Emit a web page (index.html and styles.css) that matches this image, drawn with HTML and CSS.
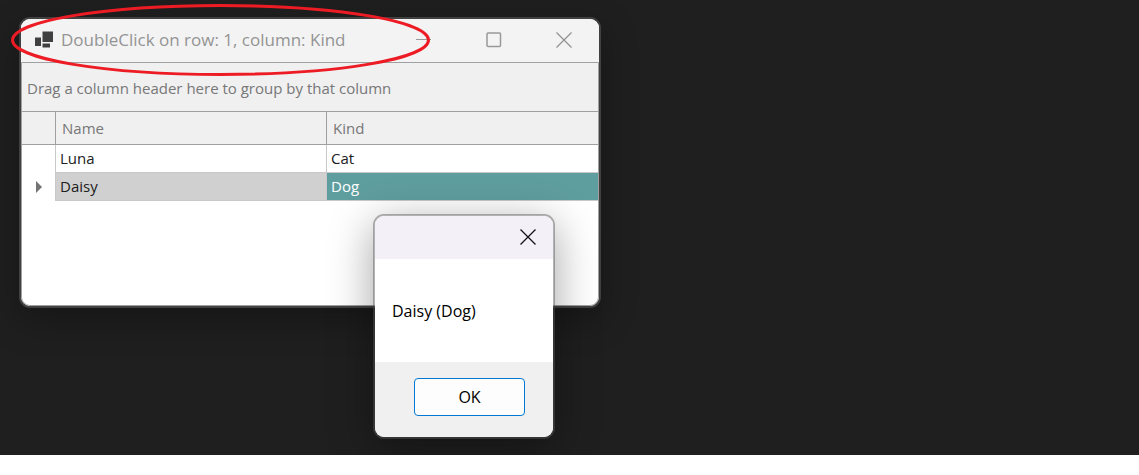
FILE: index.html
```html
<!DOCTYPE html>
<html lang="en">
<head>
<meta charset="utf-8">
<title>DoubleClick on row: 1, column: Kind</title>
<link rel="stylesheet" href="styles.css">
</head>
<body>
<main class="desktop">
  <section class="window">
    <header class="titlebar">
      <svg class="app-icon" width="19" height="18" viewBox="0 0 19 18" aria-hidden="true">
        <path d="M7.500 .5h10.500v10.500h-10.500zM0 6.500h6v8.500H0zM7.500 12.500h7.500v4h-7.500z" fill="#404040"/>
      </svg>
      <h1 class="title">DoubleClick on row: 1, column: Kind</h1>
      <div class="controls">
        <button class="control" type="button" aria-label="Minimize">
          <svg width="16" height="16" viewBox="0 0 16 16"><path d="M0 7.500h15" fill="none" stroke="#999"/></svg>
        </button>
        <button class="control" type="button" aria-label="Maximize">
          <svg width="16" height="16" viewBox="0 0 16 16"><rect x="1" y="1" width="13.500" height="13.500" rx="1" fill="none" stroke="#999" stroke-width="1.500"/></svg>
        </button>
        <button class="control" type="button" aria-label="Close">
          <svg width="16" height="16" viewBox="0 0 16 16"><path d="M.5.5l15 15M15.500 .5L.5 15.500" fill="none" stroke="#929292" stroke-width="1.300"/></svg>
        </button>
      </div>
    </header>
    <div class="grid">
      <p class="group-panel">Drag a column header here to group by that column</p>
      <table class="table">
        <thead>
          <tr><th class="indicator"></th><th class="heading name">Name</th><th class="heading">Kind</th></tr>
        </thead>
        <tbody>
          <tr><td class="indicator"></td><td class="cell">Luna</td><td class="cell">Cat</td></tr>
          <tr>
            <td class="indicator"><svg class="arrow" width="6" height="12" viewBox="0 0 6 12" aria-hidden="true"><path d="M0 0l6 6-6 6z" fill="#737373"/></svg></td>
            <td class="cell selected">Daisy</td><td class="cell focused">Dog</td>
          </tr>
        </tbody>
      </table>
    </div>
  </section>

  <section class="dialog" role="dialog" aria-label="Message">
    <header class="dialog-bar">
      <button class="dialog-close" type="button" aria-label="Close">
        <svg width="16" height="16" viewBox="0 0 16 16"><path d="M.5.5l15 15M15.500 .5L.5 15.500" fill="none" stroke="#15131a" stroke-width="1.300"/></svg>
      </button>
    </header>
    <p class="message">Daisy (Dog)</p>
    <footer class="dialog-footer"><button class="ok" type="button">OK</button></footer>
  </section>

  <svg class="callout" width="420" height="74" viewBox="0 0 420 74" aria-hidden="true">
    <ellipse cx="209.500" cy="37" rx="208" ry="34.500" fill="none" stroke="#ed1c24" stroke-width="3"/>
  </svg>
</main>
</body>
</html>
```

FILE: styles.css
```css
* { box-sizing: border-box; }
body {
  margin: 0;
  background: #fff;
  font-family: "Open Sans", "Noto Sans", sans-serif;
  font-size: 16px;
  line-height: 24px;
}
button { font: inherit; padding: 0; border: 0; background: none; }
svg { display: block; }
.desktop {
  position: relative;
  min-height: 455px;
  background: #1f1f1f;
  overflow: hidden;
}
.window {
  position: absolute;
  left: 19px;
  top: 17px;
  width: 582px;
  display: flex;
  flex-direction: column;
  border: 2px solid #414141;
  border-radius: 11px;
  background: #fff;
  overflow: hidden;
  box-shadow: 0 12px 36px rgba(0, 0, 0, .3);
}
.titlebar {
  display: flex;
  align-items: center;
  height: 43px;
  padding: 0 0 2px 14px;
  background: #f3f3f3;
}
.app-icon { flex: none; }
.title {
  flex: 1;
  margin: 0 0 0 7px;
  color: #949494;
  font-size: 17px;
  font-weight: 400;
  white-space: nowrap;
}
.controls { display: flex; }
.control {
  display: grid;
  place-items: center;
  width: 70px;
  height: 41px;
}
.grid {
  min-height: 244px;
  border: 1px solid #a0a0a0;
  border-radius: 0 0 9px 9px;
  font-size: 15px;
}
.group-panel {
  margin: 0;
  padding: 13px 5px 11px;
  background: #f0f0f0;
  color: #777;
}
.table {
  width: 100%;
  border-collapse: separate;
  border-spacing: 0;
  table-layout: fixed;
  text-align: left;
}
.table th {
  height: 34px;
  padding: 0;
  border-top: 1px solid #a0a0a0;
  border-bottom: 1px solid #a0a0a0;
  background: #f0f0f0;
  color: #777;
  font-weight: 400;
}
.table td { height: 28px; padding: 0; }
.table .indicator { width: 33px; }
.table .heading { padding-left: 6px; border-left: 1px solid #a0a0a0; }
.table .name { width: 271px; }
.table .cell {
  padding: 0 0 2px 4px;
  border-left: 1px solid #c8c8c8;
  border-bottom: 1px solid #c8c8c8;
  color: #202020;
}
.table .selected { background: #d0d0d0; }
.table .focused { background: #5f9e9f; color: #fff; }
.arrow { margin-left: 14px; }
.dialog {
  position: absolute;
  left: 373px;
  top: 214px;
  width: 182px;
  border: 2px solid rgba(85, 85, 85, .45);
  border-radius: 11px;
  background: #fff;
  background-clip: padding-box;
  overflow: hidden;
  box-shadow: 0 10px 44px rgba(0, 0, 0, .36);
}
.dialog-bar {
  display: flex;
  justify-content: flex-end;
  height: 43px;
  padding-bottom: 2px;
  background: #f3f0f8;
}
.dialog-close {
  display: grid;
  place-items: center;
  width: 50px;
}
.message { margin: 0; padding: 40px 17px 39px; }
.dialog-footer {
  display: flex;
  justify-content: flex-end;
  padding: 16px 28px 21px;
  background: #f0f0f0;
}
.ok {
  width: 111px;
  height: 38px;
  border: 1px solid #0078d4;
  border-radius: 4px;
  background: #fdfdfd;
}
.callout {
  position: absolute;
  left: 11px;
  top: 3px;
  pointer-events: none;
}
```
